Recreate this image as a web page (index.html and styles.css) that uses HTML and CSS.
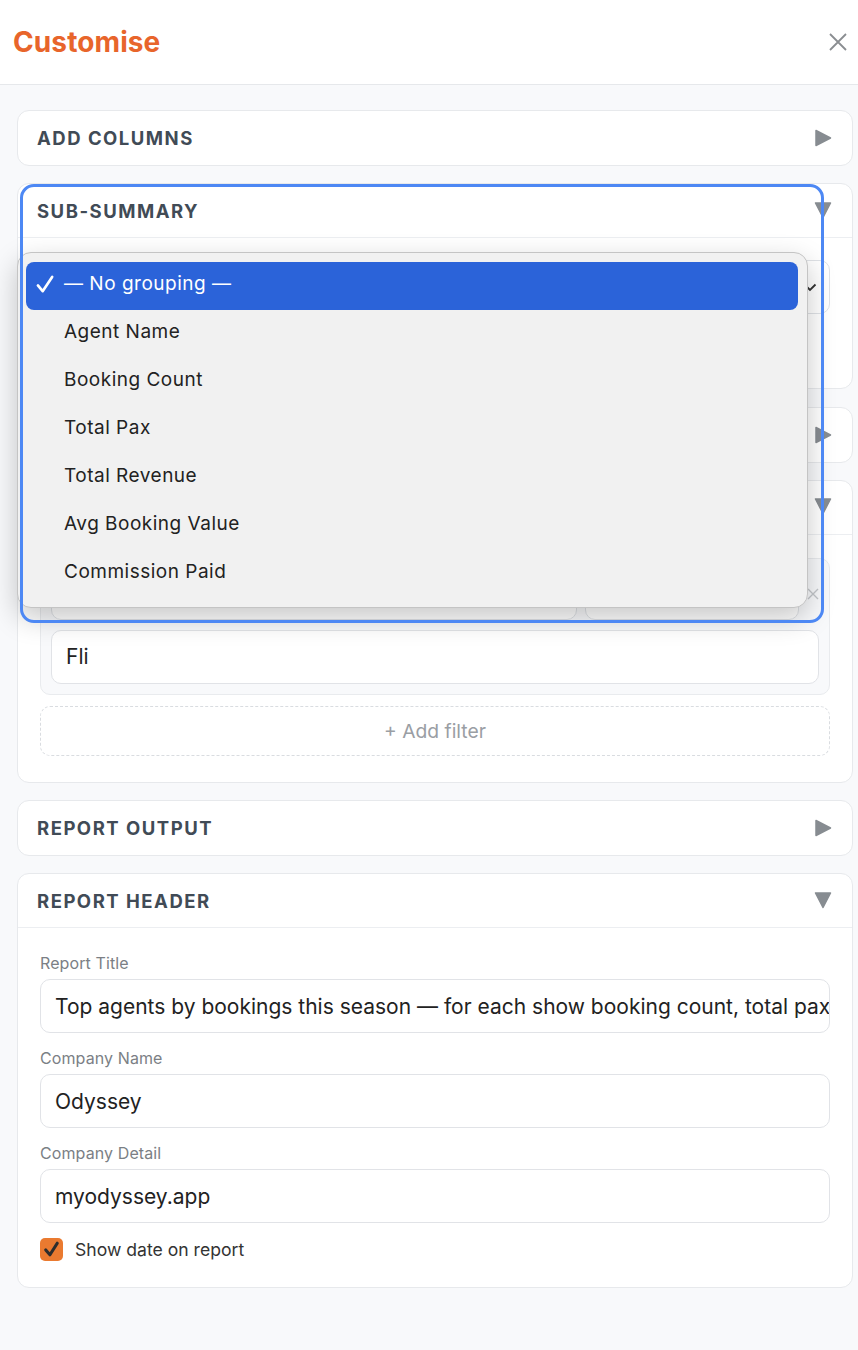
FILE: index.html
```html
<!DOCTYPE html>
<html>
  <head>
    <meta charset="utf-8" />
    <title>Customise</title>
    <link rel="stylesheet" href="styles.css">
  </head>

  <body>
    <div class="panel">
      <header class="panel-head">
        <h1>Customise</h1>
        <button class="close" aria-label="Close">
          <svg viewBox="0 0 20 20" width="20" height="20"><path d="M2 2 L18 18 M18 2 L2 18" /></svg>
        </button>
      </header>

      <main class="panel-body">
        <section class="card">
          <div class="card-head">
            <h2>Add columns</h2>
            <svg class="caret" viewBox="0 0 18 18"><polygon points="2,1.5 16.5,9 2,16.5" /></svg>
          </div>
        </section>

        <section class="card open">
          <div class="card-head">
            <h2>Sub-summary</h2>
            <svg class="caret" viewBox="0 0 18 18"><polygon points="1.5,1 16.5,1 9,15.5" /></svg>
          </div>
          <div class="card-body summary">
            <div class="select">
              <span>— No grouping —</span>
              <svg class="chevron" viewBox="0 0 14 14"><path d="M1.5 4.5 L7 10 L12.5 4.5" /></svg>
            </div>
            <p class="hint">Group rows by a column to add a subtotal line after each group, with the totals worked out from
              the columns you picked above.</p>
          </div>
        </section>

        <section class="card">
          <div class="card-head">
            <h2>Sort order</h2>
            <svg class="caret" viewBox="0 0 18 18"><polygon points="2,1.5 16.5,9 2,16.5" /></svg>
          </div>
        </section>

        <section class="card open">
          <div class="card-head">
            <h2>Filters</h2>
            <svg class="caret" viewBox="0 0 18 18"><polygon points="1.5,1 16.5,1 9,15.5" /></svg>
          </div>
          <div class="card-body filters">
            <div class="filter-group">
              <div class="filter-row">
                <div class="select small"><span>Agent Name</span></div>
                <div class="select small"><span>contains</span></div>
                <svg class="remove" viewBox="0 0 12 12"><path d="M1 1 L11 11 M11 1 L1 11" /></svg>
              </div>
              <input class="field" type="text" value="Fli" />
            </div>
            <div class="add-filter">+ Add filter</div>
          </div>
        </section>

        <section class="card">
          <div class="card-head">
            <h2>Report output</h2>
            <svg class="caret" viewBox="0 0 18 18"><polygon points="2,1.5 16.5,9 2,16.5" /></svg>
          </div>
        </section>

        <section class="card open">
          <div class="card-head">
            <h2>Report header</h2>
            <svg class="caret" viewBox="0 0 18 18"><polygon points="1.5,1 16.5,1 9,15.5" /></svg>
          </div>
          <div class="card-body form">
            <label class="label">Report Title</label>
            <input class="field clip" type="text" value="Top agents by bookings this season — for each show booking count, total pax, revenue and commission" />
            <label class="label">Company Name</label>
            <input class="field" type="text" value="Odyssey" />
            <label class="label">Company Detail</label>
            <input class="field" type="text" value="myodyssey.app" />
            <div class="check-row">
              <span class="checkbox">
                <svg viewBox="0 0 22 22"><path d="M5.5 11.5 L9.5 16 L16.5 5" /></svg>
              </span>
              <span>Show date on report</span>
            </div>
          </div>
        </section>

        <!-- open grouping picker, drawn over the cards -->
        <ul class="select-menu">
          <li class="selected">
            <svg class="tick" viewBox="0 0 20 20"><path d="M2 11 L7 17 L17 2" /></svg>
            — No grouping —
          </li>
          <li>Agent Name</li>
          <li>Booking Count</li>
          <li>Total Pax</li>
          <li>Total Revenue</li>
          <li>Avg Booking Value</li>
          <li>Commission Paid</li>
        </ul>
        <div class="focus-ring"></div>
      </main>
    </div>
  </body>
</html>
```

FILE: styles.css
```css
* {
  box-sizing: border-box;
}

html,
body {
  margin: 0;
  padding: 0;
}

body {
  width: 858px;
  height: 1350px;
  overflow: hidden;
  background-color: #f8f9fb;
  font-family: Inter, 'Liberation Sans', sans-serif;
  color: #222;
}

.panel-head {
  height: 85px;
  background-color: #fff;
  border-bottom: 1px solid #e6e8eb;
  display: flex;
  align-items: center;
  justify-content: space-between;
  padding: 0 10px 0 13px;
}

.panel-head h1 {
  margin: 0;
  font-size: 28px;
  font-weight: 700;
  color: #e8652b;
  letter-spacing: 0.1px;
}

.close {
  border: 0;
  background: none;
  padding: 0;
  width: 20px;
  height: 20px;
  cursor: pointer;
}

.close svg {
  display: block;
  stroke: #8a8d91;
  stroke-width: 1.8;
  fill: none;
}

.panel-body {
  position: relative;
  display: flex;
  flex-direction: column;
  gap: 17.3px;
  padding: 25px 5px 40px 17px;
}

.card {
  background-color: #fff;
  border: 1px solid #e7e9ec;
  border-radius: 12px;
}

.card-head {
  height: 54px;
  display: flex;
  align-items: center;
  justify-content: space-between;
  padding: 0 20px 0 19px;
}

.card.open .card-head {
  border-bottom: 1px solid #eceef1;
}

.card-head h2 {
  margin: 0;
  font-size: 18.5px;
  font-weight: 700;
  letter-spacing: 1.5px;
  text-transform: uppercase;
  color: #414b56;
}

.caret {
  width: 18px;
  height: 18px;
  fill: #878c91;
  stroke: #878c91;
  stroke-width: 1.5;
  stroke-linejoin: round;
}

.card-body {
  padding: 22px;
}

.summary {
  padding-bottom: 24px;
}

.select {
  height: 54px;
  border: 1px solid #dfe2e6;
  border-radius: 10px;
  display: flex;
  align-items: center;
  justify-content: space-between;
  padding: 0 12px 0 14px;
  font-size: 21px;
  background-color: #fff;
}

.chevron {
  width: 14px;
  height: 14px;
  fill: none;
  stroke: #333;
  stroke-width: 1.8;
}

.hint {
  margin: 10px 0 0;
  font-size: 15px;
  line-height: 20px;
  color: #8b9096;
}

.filters {
  padding: 23px 22px 26px;
}

.filter-group {
  background-color: #f8f9fb;
  border: 1px solid #e9ebee;
  border-radius: 10px;
  padding: 10px;
}

.filter-row {
  display: grid;
  grid-template-columns: 1fr 214px 12px;
  gap: 8px;
  align-items: center;
  margin-bottom: 10px;
}

.select.small {
  height: 51px;
}

.remove {
  width: 12px;
  height: 12px;
  fill: none;
  stroke: #c3c6ca;
  stroke-width: 1.4;
}

.field {
  display: block;
  width: 100%;
  height: 54px;
  border: 1px solid #e1e3e7;
  border-radius: 10px;
  padding: 0 14px;
  font-family: inherit;
  font-size: 21px;
  color: #222;
  background-color: #fff;
  outline: none;
}

.field.clip {
  padding-right: 0;
}

.add-filter {
  margin-top: 11px;
  height: 50px;
  border: 1px dashed #d9dce0;
  border-radius: 10px;
  display: flex;
  align-items: center;
  justify-content: center;
  font-size: 19.3px;
  color: #9a9ea4;
}

.form {
  padding: 25px 22px 26px;
}

.label {
  display: block;
  font-size: 16px;
  line-height: 20px;
  letter-spacing: 0.1px;
  color: #7b7f85;
  margin-bottom: 6px;
}

.form .field {
  margin-bottom: 15px;
}

.check-row {
  display: flex;
  align-items: center;
  gap: 12px;
  font-size: 17.6px;
  color: #333;
}

.checkbox {
  width: 23px;
  height: 23px;
  border-radius: 5px;
  background-color: #ea7a30;
}

.checkbox svg {
  display: block;
  width: 23px;
  height: 23px;
  fill: none;
  stroke: #2d2d2d;
  stroke-width: 3;
  stroke-linecap: round;
  stroke-linejoin: round;
}

/* popup list of the grouping select */
.select-menu {
  position: absolute;
  top: 167px;
  left: 17px;
  width: 791px;
  margin: 0;
  padding: 9px 9px 9px 8px;
  list-style: none;
  background-color: #f1f1f1;
  border: 1px solid #c4c4c4;
  border-radius: 14px;
  box-shadow: 0 10px 28px rgba(0, 0, 0, 0.22);
  z-index: 10;
}

.select-menu li {
  position: relative;
  height: 48px;
  display: flex;
  align-items: center;
  padding: 0 0 5px 38px;
  font-size: 19px;
  letter-spacing: 0.5px;
  color: #222;
  border-radius: 8px;
}

.select-menu li.selected {
  background-color: #2b63d9;
  color: #fff;
}

.tick {
  position: absolute;
  left: 10px;
  top: 13px;
  width: 19px;
  height: 19px;
  fill: none;
  stroke: #fff;
  stroke-width: 2.8;
  stroke-linecap: round;
  stroke-linejoin: round;
}

.focus-ring {
  position: absolute;
  top: 99px;
  left: 20px;
  width: 804px;
  height: 439px;
  border: 3px solid #4d88f4;
  border-radius: 14px;
  z-index: 11;
  pointer-events: none;
}
```
